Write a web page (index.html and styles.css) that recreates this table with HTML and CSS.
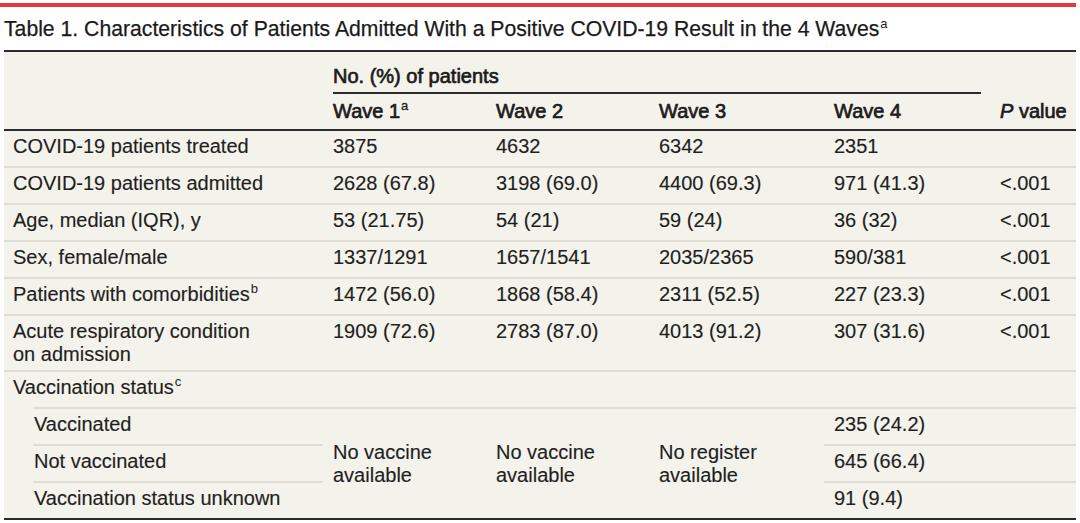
FILE: index.html
```html
<!DOCTYPE html>
<html lang="en">
<head>
<meta charset="utf-8">
<title>Table 1</title>
<link rel="stylesheet" href="styles.css">
</head>
<body>
<div class="page">
  <div class="redbar"></div>
  <h1 class="title">Table 1. Characteristics of Patients Admitted With a Positive COVID-19 Result in the 4 Waves<sup>a</sup></h1>
  <table class="data">
    <colgroup>
      <col class="c-label">
      <col class="c-w1">
      <col class="c-w2">
      <col class="c-w3">
      <col class="c-w4">
      <col class="c-p">
    </colgroup>
    <thead>
      <tr class="h1">
        <th rowspan="2" class="blank"></th>
        <th colspan="4" class="span"><div class="spanline">No. (%) of patients</div></th>
        <th rowspan="2" class="pval"><i>P</i> value</th>
      </tr>
      <tr class="h2">
        <th>Wave 1<sup>a</sup></th>
        <th>Wave 2</th>
        <th>Wave 3</th>
        <th>Wave 4</th>
      </tr>
    </thead>
    <tbody>
      <tr class="row">
        <td class="label">COVID-19 patients treated</td>
        <td>3875</td><td>4632</td><td>6342</td><td>2351</td><td></td>
      </tr>
      <tr class="row">
        <td class="label">COVID-19 patients admitted</td>
        <td>2628 (67.8)</td><td>3198 (69.0)</td><td>4400 (69.3)</td><td>971 (41.3)</td><td>&lt;.001</td>
      </tr>
      <tr class="row">
        <td class="label">Age, median (IQR), y</td>
        <td>53 (21.75)</td><td>54 (21)</td><td>59 (24)</td><td>36 (32)</td><td>&lt;.001</td>
      </tr>
      <tr class="row">
        <td class="label">Sex, female/male</td>
        <td>1337/1291</td><td>1657/1541</td><td>2035/2365</td><td>590/381</td><td>&lt;.001</td>
      </tr>
      <tr class="row">
        <td class="label">Patients with comorbidities<sup>b</sup></td>
        <td>1472 (56.0)</td><td>1868 (58.4)</td><td>2311 (52.5)</td><td>227 (23.3)</td><td>&lt;.001</td>
      </tr>
      <tr class="row tall">
        <td class="label">Acute respiratory condition<br>on admission</td>
        <td>1909 (72.6)</td><td>2783 (87.0)</td><td>4013 (91.2)</td><td>307 (31.6)</td><td>&lt;.001</td>
      </tr>
      <tr class="row plain">
        <td class="label" colspan="6">Vaccination status<sup>c</sup></td>
      </tr>
      <tr class="sub">
        <td class="subcell"><div class="subin">Vaccinated</div></td>
        <td rowspan="3" class="na">No vaccine<br>available</td>
        <td rowspan="3" class="na">No vaccine<br>available</td>
        <td rowspan="3" class="na">No register<br>available</td>
        <td class="lined">235 (24.2)</td>
        <td class="lined"></td>
      </tr>
      <tr class="sub">
        <td class="subcell"><div class="subin">Not vaccinated</div></td>
        <td class="lined">645 (66.4)</td>
        <td class="lined"></td>
      </tr>
      <tr class="sub">
        <td class="subcell"><div class="subin">Vaccination status unknown</div></td>
        <td class="lined">91 (9.4)</td>
        <td class="lined"></td>
      </tr>
    </tbody>
  </table>
</div>
</body>
</html>
```

FILE: styles.css
```css
html, body {
  margin: 0;
  padding: 0;
  background: #ffffff;
}

body {
  font-family: "Liberation Sans", Arial, sans-serif;
  color: #1f1f1f;
  width: 1080px;
  height: 523px;
  overflow: hidden;
}

.page {
  padding-top: 3px;
}

.redbar {
  width: 1076px;
  height: 4px;
  background: #e6393f;
}

.title {
  margin: 10px 0 9px 4px;
  font-size: 21.2px;
  line-height: 24px;
  font-weight: normal;
  color: #1a1a1a;
  -webkit-text-stroke: 0.25px #1a1a1a;
}

.title sup {
  font-size: 13px;
  line-height: 0;
  vertical-align: 8px;
  margin-left: 1px;
  -webkit-text-stroke: 0;
}

.data {
  margin-left: 4px;
  width: 1072px;
  table-layout: fixed;
  border-collapse: separate;
  border-spacing: 0;
  background: #f4f3eb;
  border-top: 2px solid #2b2b2b;
  border-bottom: 2px solid #2b2b2b;
  font-size: 20px;
  line-height: 23px;
  -webkit-text-stroke: 0.15px #1f1f1f;
}

.c-label { width: 319px; }
.c-w1 { width: 163px; }
.c-w2 { width: 163px; }
.c-w3 { width: 175px; }
.c-w4 { width: 166px; }
.c-p { width: 86px; }

.data th {
  font-weight: normal;
  text-align: left;
  color: #1c1c1c;
  -webkit-text-stroke: 0.7px #1c1c1c;
}

.data sup {
  font-size: 13px;
  line-height: 0;
  vertical-align: 8px;
  margin-left: 1px;
  -webkit-text-stroke: 0;
}

.data th sup {
  -webkit-text-stroke: 0.3px #1c1c1c;
}

.h1 .span {
  padding: 0;
}

.spanline {
  margin: 0 9px 0 10px;
  padding: 13px 0 4px 0;
  border-bottom: 2px solid #2b2b2b;
}

.h1 .blank {
  padding: 0;
  border-bottom: 2px solid #2b2b2b;
}

.h1 .pval {
  vertical-align: bottom;
  padding: 0 0 6px 10px;
  border-bottom: 2px solid #2b2b2b;
}

.h2 th {
  padding: 6px 0 6px 10px;
  border-bottom: 2px solid #2b2b2b;
}

.data td {
  padding: 4px 0 8px 10px;
  vertical-align: top;
  text-align: left;
  white-space: nowrap;
}

.row td {
  border-bottom: 2px solid #dfddd3;
}

.row.tall td {
  padding-bottom: 4px;
}

.row.plain td {
  border-bottom: none;
}

.data td.label {
  padding-left: 9px;
}

.data td.subcell {
  padding: 0 0 0 29px;
}

.subin {
  border-top: 2px solid #dfddd3;
  padding: 4px 0 8px 1px;
}

.data td.na {
  vertical-align: middle;
  border-top: 2px solid #dfddd3;
  padding: 0 0 0 10px;
}

.data td.lined {
  border-top: 2px solid #dfddd3;
}
```
